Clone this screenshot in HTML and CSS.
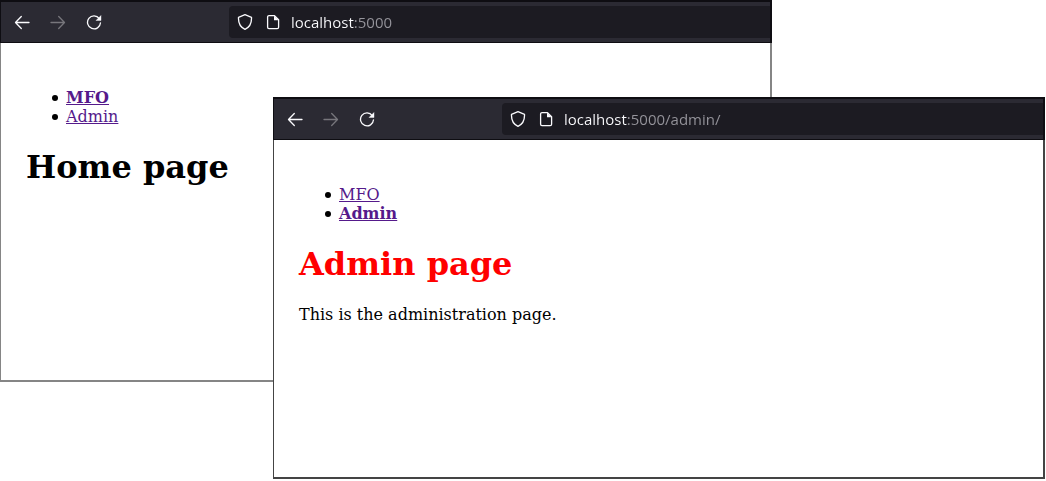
FILE: index.html
```html
<!DOCTYPE html>
<html lang="en">
<head>
<meta charset="utf-8">
<title>Home and admin pages</title>
<link rel="stylesheet" href="styles.css">
</head>
<body>
<svg class="sprite" aria-hidden="true">
  <symbol id="arrow" viewBox="0 0 16 16"><path d="M15 8.500H1.800M7.300 2.500L1.500 8.500l5.800 6" fill="none" stroke="currentColor" stroke-width="1.300" stroke-linecap="round" stroke-linejoin="round"/></symbol>
  <symbol id="reload" viewBox="0 0 16 16"><path d="M13.300 4.600A6.500 6.500 0 1 0 14.500 8.800" fill="none" stroke="currentColor" stroke-width="1.300" stroke-linecap="round"/><path d="M15 1.500v5H10z" fill="currentColor" stroke="currentColor" stroke-width=".4" stroke-linejoin="round"/></symbol>
  <symbol id="shield" viewBox="0 0 16 16"><path d="M8 .7L14.500 3.300C14.800 9 12.500 13.200 8 15.300 3.500 13.200 1.200 9 1.500 3.300z" fill="none" stroke="currentColor" stroke-width="1.300" stroke-linejoin="round"/></symbol>
  <symbol id="document" viewBox="0 0 16 16"><path d="M9.500 1.600H4A1.400 1.400 0 0 0 2.600 3v10.200A1.400 1.400 0 0 0 4 14.600h8.200a1.400 1.400 0 0 0 1.400-1.400V5.700z" fill="none" stroke="currentColor" stroke-width="1.300" stroke-linejoin="round"/><path d="M9 1.600v4.600h4.600z" fill="currentColor"/></symbol>
</svg>
<div class="desktop">
  <section class="window window-home" aria-label="Home window">
    <div class="toolbar">
      <button class="tool" type="button" aria-label="Back"><svg class="icon"><use href="#arrow"/></svg></button>
      <button class="tool tool-forward" type="button" aria-label="Forward" disabled><svg class="icon"><use href="#arrow"/></svg></button>
      <button class="tool" type="button" aria-label="Reload"><svg class="icon"><use href="#reload"/></svg></button>
      <div class="urlbar">
        <svg class="icon"><use href="#shield"/></svg>
        <svg class="icon"><use href="#document"/></svg>
        <input class="address" type="text" aria-label="Address" value="localhost:5000">
      </div>
    </div>
    <div class="page">
      <ul class="nav">
        <li class="item"><a class="link current" href="#home">MFO</a></li>
        <li class="item"><a class="link" href="#admin">Admin</a></li>
      </ul>
      <h1 class="title">Home page</h1>
    </div>
  </section>
  <section class="window window-admin" aria-label="Admin window">
    <div class="toolbar">
      <button class="tool" type="button" aria-label="Back"><svg class="icon"><use href="#arrow"/></svg></button>
      <button class="tool tool-forward" type="button" aria-label="Forward" disabled><svg class="icon"><use href="#arrow"/></svg></button>
      <button class="tool" type="button" aria-label="Reload"><svg class="icon"><use href="#reload"/></svg></button>
      <div class="urlbar">
        <svg class="icon"><use href="#shield"/></svg>
        <svg class="icon"><use href="#document"/></svg>
        <input class="address" type="text" aria-label="Address" value="localhost:5000/admin/">
      </div>
    </div>
    <div class="page">
      <ul class="nav">
        <li class="item"><a class="link" href="#home">MFO</a></li>
        <li class="item"><a class="link current" href="#admin">Admin</a></li>
      </ul>
      <h1 class="title title-admin">Admin page</h1>
      <p class="text">This is the administration page.</p>
    </div>
  </section>
</div>
</body>
</html>
```
FILE: styles.css
```css
* {
  box-sizing: border-box;
}

body {
  margin: 0;
  background: #fff;
  color: #000;
  font: 16px/19px "DejaVu Serif", serif;
}

.sprite {
  position: absolute;
  width: 0;
  height: 0;
}

.desktop {
  position: relative;
  min-height: 100vh;
}

/* Two overlapping browser windows */
.window {
  position: absolute;
}

.window-home {
  top: 0;
  left: 0;
  right: 274px;
  --frame: #858585;
}

.window-admin {
  top: 97px;
  left: 273px;
  right: 1px;
  --frame: #444;
}

.toolbar {
  display: flex;
  align-items: center;
  gap: 4px;
  padding: 4px 0 4px 5px;
  border: solid #0e0d12;
  border-width: 2px 2px 1px 1px;
  background: #2b2a33;
}

.tool {
  display: flex;
  align-items: center;
  justify-content: center;
  width: 32px;
  height: 32px;
  padding: 0;
  border: 0;
  border-radius: 4px;
  background: none;
  color: #fbfbfe;
}

.tool-forward {
  color: #77767c;
  transform: scaleX(-1);
}

.icon {
  flex: none;
  width: 16px;
  height: 16px;
}

.urlbar {
  display: flex;
  flex: 1;
  align-items: center;
  gap: 12px;
  min-width: 0;
  height: 32px;
  margin-left: 115px;
  padding-left: 8px;
  border-radius: 4px 0 0 4px;
  background: #1c1b22;
  color: #fbfbfe;
}

/* The host is bright, the rest of the address is dimmed */
.address {
  flex: 1;
  min-width: 0;
  height: 32px;
  margin-left: -2px;
  padding: 0;
  border: 0;
  outline: 0;
  background: linear-gradient(90deg, #fbfbfe 63px, #96959c 63px) text;
  color: transparent;
  font: 15px/20px "Open Sans", sans-serif;
}

.page {
  min-height: 339px;
  padding: 45px 25px;
  border: solid var(--frame);
  border-width: 0 2px 2px 1px;
  background: #fff;
}

.nav {
  margin: 0;
  padding-left: 40px;
  list-style: none;
}

.item::before {
  content: "";
  display: inline-block;
  width: 6px;
  height: 6px;
  margin: 0 8px 0 -14px;
  border-radius: 50%;
  background: #000;
  vertical-align: 2px;
}

.link {
  color: #551a8b;
}

.current {
  font-weight: bold;
}

.title {
  margin: 22px 0;
  font-size: 32px;
  line-height: 38px;
}

.title-admin {
  color: #f00;
}

.text {
  margin: 0;
}
```
